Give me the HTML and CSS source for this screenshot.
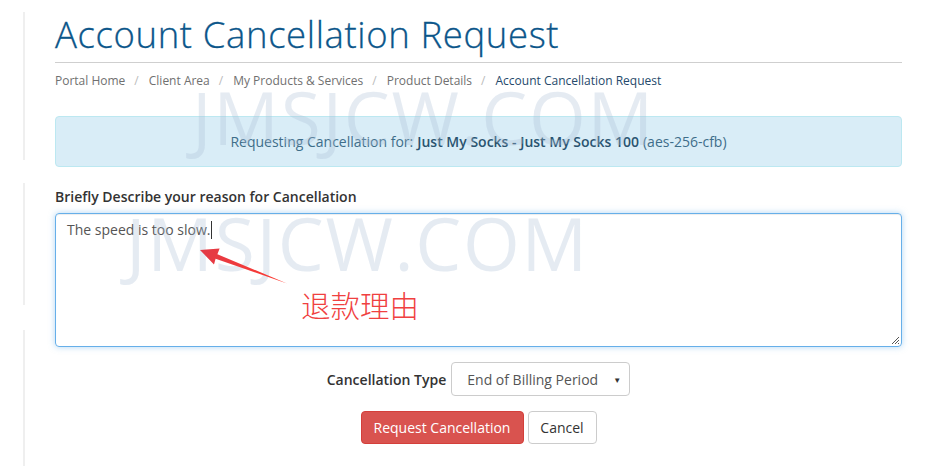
FILE: index.html
```html
<!DOCTYPE html>
<html lang="en">
<head>
<meta charset="utf-8">
<title>Account Cancellation Request</title>
<link rel="stylesheet" href="styles.css">
</head>
<body>
<div class="page">
  <div class="gutter">
    <div class="seg seg-1"></div>
    <div class="seg seg-2"></div>
    <div class="seg seg-3"></div>
  </div>
  <main class="main">
    <h1 class="title">Account Cancellation Request</h1>
    <hr class="rule">
    <ol class="crumbs">
      <li><a href="#">Portal Home</a></li>
      <li><a href="#">Client Area</a></li>
      <li><a href="#">My Products &amp; Services</a></li>
      <li><a href="#">Product Details</a></li>
      <li class="active">Account Cancellation Request</li>
    </ol>
    <div class="alert">Requesting Cancellation for: <strong>Just My Socks - Just My Socks 100</strong> (aes-256-cfb)</div>
    <form class="form">
      <label class="reason-label">Briefly Describe your reason for Cancellation</label>
      <div class="textarea">The speed is too slow.<span class="caret"></span>
        <svg class="grip" width="9" height="9" viewBox="0 0 9 9"><path d="M1 8 L8 1 M4 8 L8 4 M7 8 L8 7" stroke="#555" stroke-width="1" fill="none"/></svg>
      </div>
      <div class="type-row">
        <span class="type-label">Cancellation Type</span>
        <div class="select"><span>End of Billing Period</span><span class="arrow">▼</span></div>
      </div>
      <div class="buttons">
        <button type="button" class="btn btn-danger">Request Cancellation</button>
        <button type="button" class="btn btn-default">Cancel</button>
      </div>
    </form>
  </main>
</div>
<div class="overlay">
  <div class="wm wm-1">JMSJCW.COM</div>
  <div class="wm wm-2">JMSJCW.COM</div>
  <svg class="arrow-note" width="931" height="466" viewBox="0 0 931 466">
    <defs>
      <linearGradient id="ag" x1="200" y1="250" x2="287" y2="283" gradientUnits="userSpaceOnUse">
        <stop offset="0" stop-color="#e23a46"/>
        <stop offset="1" stop-color="#ff3a30"/>
      </linearGradient>
    </defs>
    <polygon points="200,250 219.6,248.4 217.4,254.2 287,283.5 215.6,258.8 214,264.4" fill="url(#ag)"/>
  </svg>
  <div class="note">退款理由</div>
</div>
</body>
</html>
```
FILE: styles.css
```css
* { box-sizing: border-box; }
html, body { margin: 0; padding: 0; background: #fff; }
body {
  position: relative;
  width: 931px;
  height: 466px;
  overflow: hidden;
  font-family: "Open Sans", "Liberation Sans", sans-serif;
  color: #333;
}
.page { display: flex; }
.gutter {
  width: 55px;
  flex: none;
  display: flex;
  flex-direction: column;
  padding-top: 12px;
}
.seg { width: 2px; margin-left: 23px; background: #efefef; }
.seg-1 { height: 148px; }
.seg-2 { height: 122px; margin-top: 23px; }
.seg-3 { height: 140px; margin-top: 25px; }
.main { width: 847px; flex: none; }
.title {
  margin: 14px 0 0;
  font-family: "Open Sans", sans-serif;
  font-weight: 300;
  font-size: 36.5px;
  line-height: 40px;
  color: #0b568a;
  letter-spacing: 0.62px;
  -webkit-text-stroke: 0.3px #0b568a;
}
.rule { margin: 8px 0 0; border: 0; border-top: 1px solid #cfcfcf; height: 0; }
.crumbs {
  list-style: none;
  margin: 9px 0 0;
  padding: 0;
  display: flex;
  font-size: 12px;
  line-height: 18px;
}
.crumbs li + li::before { content: "/"; color: #bbb; padding: 0 10px 0 9px; }
.crumbs a { color: #707070; text-decoration: none; }
.crumbs .active { color: #25496b; }
.alert {
  margin-top: 26px;
  height: 51px;
  border: 1px solid #bce8f1;
  border-radius: 4px;
  background: #d9edf7;
  color: #3e6e8a;
  font-size: 14px;
  display: flex;
  align-items: center;
  justify-content: center;
}
.alert strong { font-weight: 600; color: #2a5470; margin: 0 4px; }
.form { display: flex; flex-direction: column; }
.reason-label {
  margin-top: 21px;
  font-size: 14px;
  font-weight: 600;
  line-height: 18px;
  color: #333;
}
.textarea {
  position: relative;
  margin-top: 7px;
  height: 134px;
  border: 1px solid #66afe9;
  border-radius: 4px;
  padding: 6px 11px;
  font-size: 14px;
  line-height: 20px;
  color: #555;
  box-shadow: inset 0 1px 1px rgba(0,0,0,.075), 0 0 6px rgba(102,175,233,.5);
}
.caret { display: inline-block; width: 1px; height: 18px; background: #333; vertical-align: -4px; margin-left: 1px; }
.grip { position: absolute; right: 1px; bottom: 1px; }
.type-row {
  margin-top: 15px;
  display: flex;
  justify-content: center;
  align-items: center;
  gap: 5px;
}
.type-label { font-size: 14px; font-weight: 600; color: #333; }
.select {
  width: 179px;
  height: 34px;
  border: 1px solid #ccc;
  border-radius: 4px;
  padding: 0 8px 0 15px;
  display: flex;
  align-items: center;
  justify-content: space-between;
  font-size: 14px;
  color: #555;
}
.select .arrow { font-size: 8px; color: #333; }
.buttons {
  margin-top: 15px;
  display: flex;
  justify-content: center;
  gap: 4px;
}
.btn {
  height: 33px;
  border-radius: 4px;
  font-family: "Open Sans", sans-serif;
  font-size: 14px;
  padding: 0 8px;
}
.btn-danger { width: 163px; background: #d9534f; border: 1px solid #d43f3a; color: #fff; }
.btn-default { width: 69px; background: #fff; border: 1px solid #ccc; color: #333; }
.overlay { position: absolute; left: 0; top: 0; width: 931px; height: 466px; pointer-events: none; }
.wm {
  position: absolute;
  font-family: "Open Sans", sans-serif;
  font-weight: 400;
  font-size: 73px;
  line-height: 1;
  letter-spacing: 1.7px;
  color: rgba(170, 188, 212, 0.3);
  white-space: nowrap;
}
.wm-1 { left: 192px; top: 80px; }
.wm-2 { left: 126px; top: 206px; }
.arrow-note { position: absolute; left: 0; top: 0; }
.note {
  position: absolute;
  left: 301px;
  top: 286px;
  font-family: "Noto Sans CJK SC", sans-serif;
  font-size: 29.5px;
  line-height: 36px;
  font-weight: 300;
  color: #f04040;
}
```
